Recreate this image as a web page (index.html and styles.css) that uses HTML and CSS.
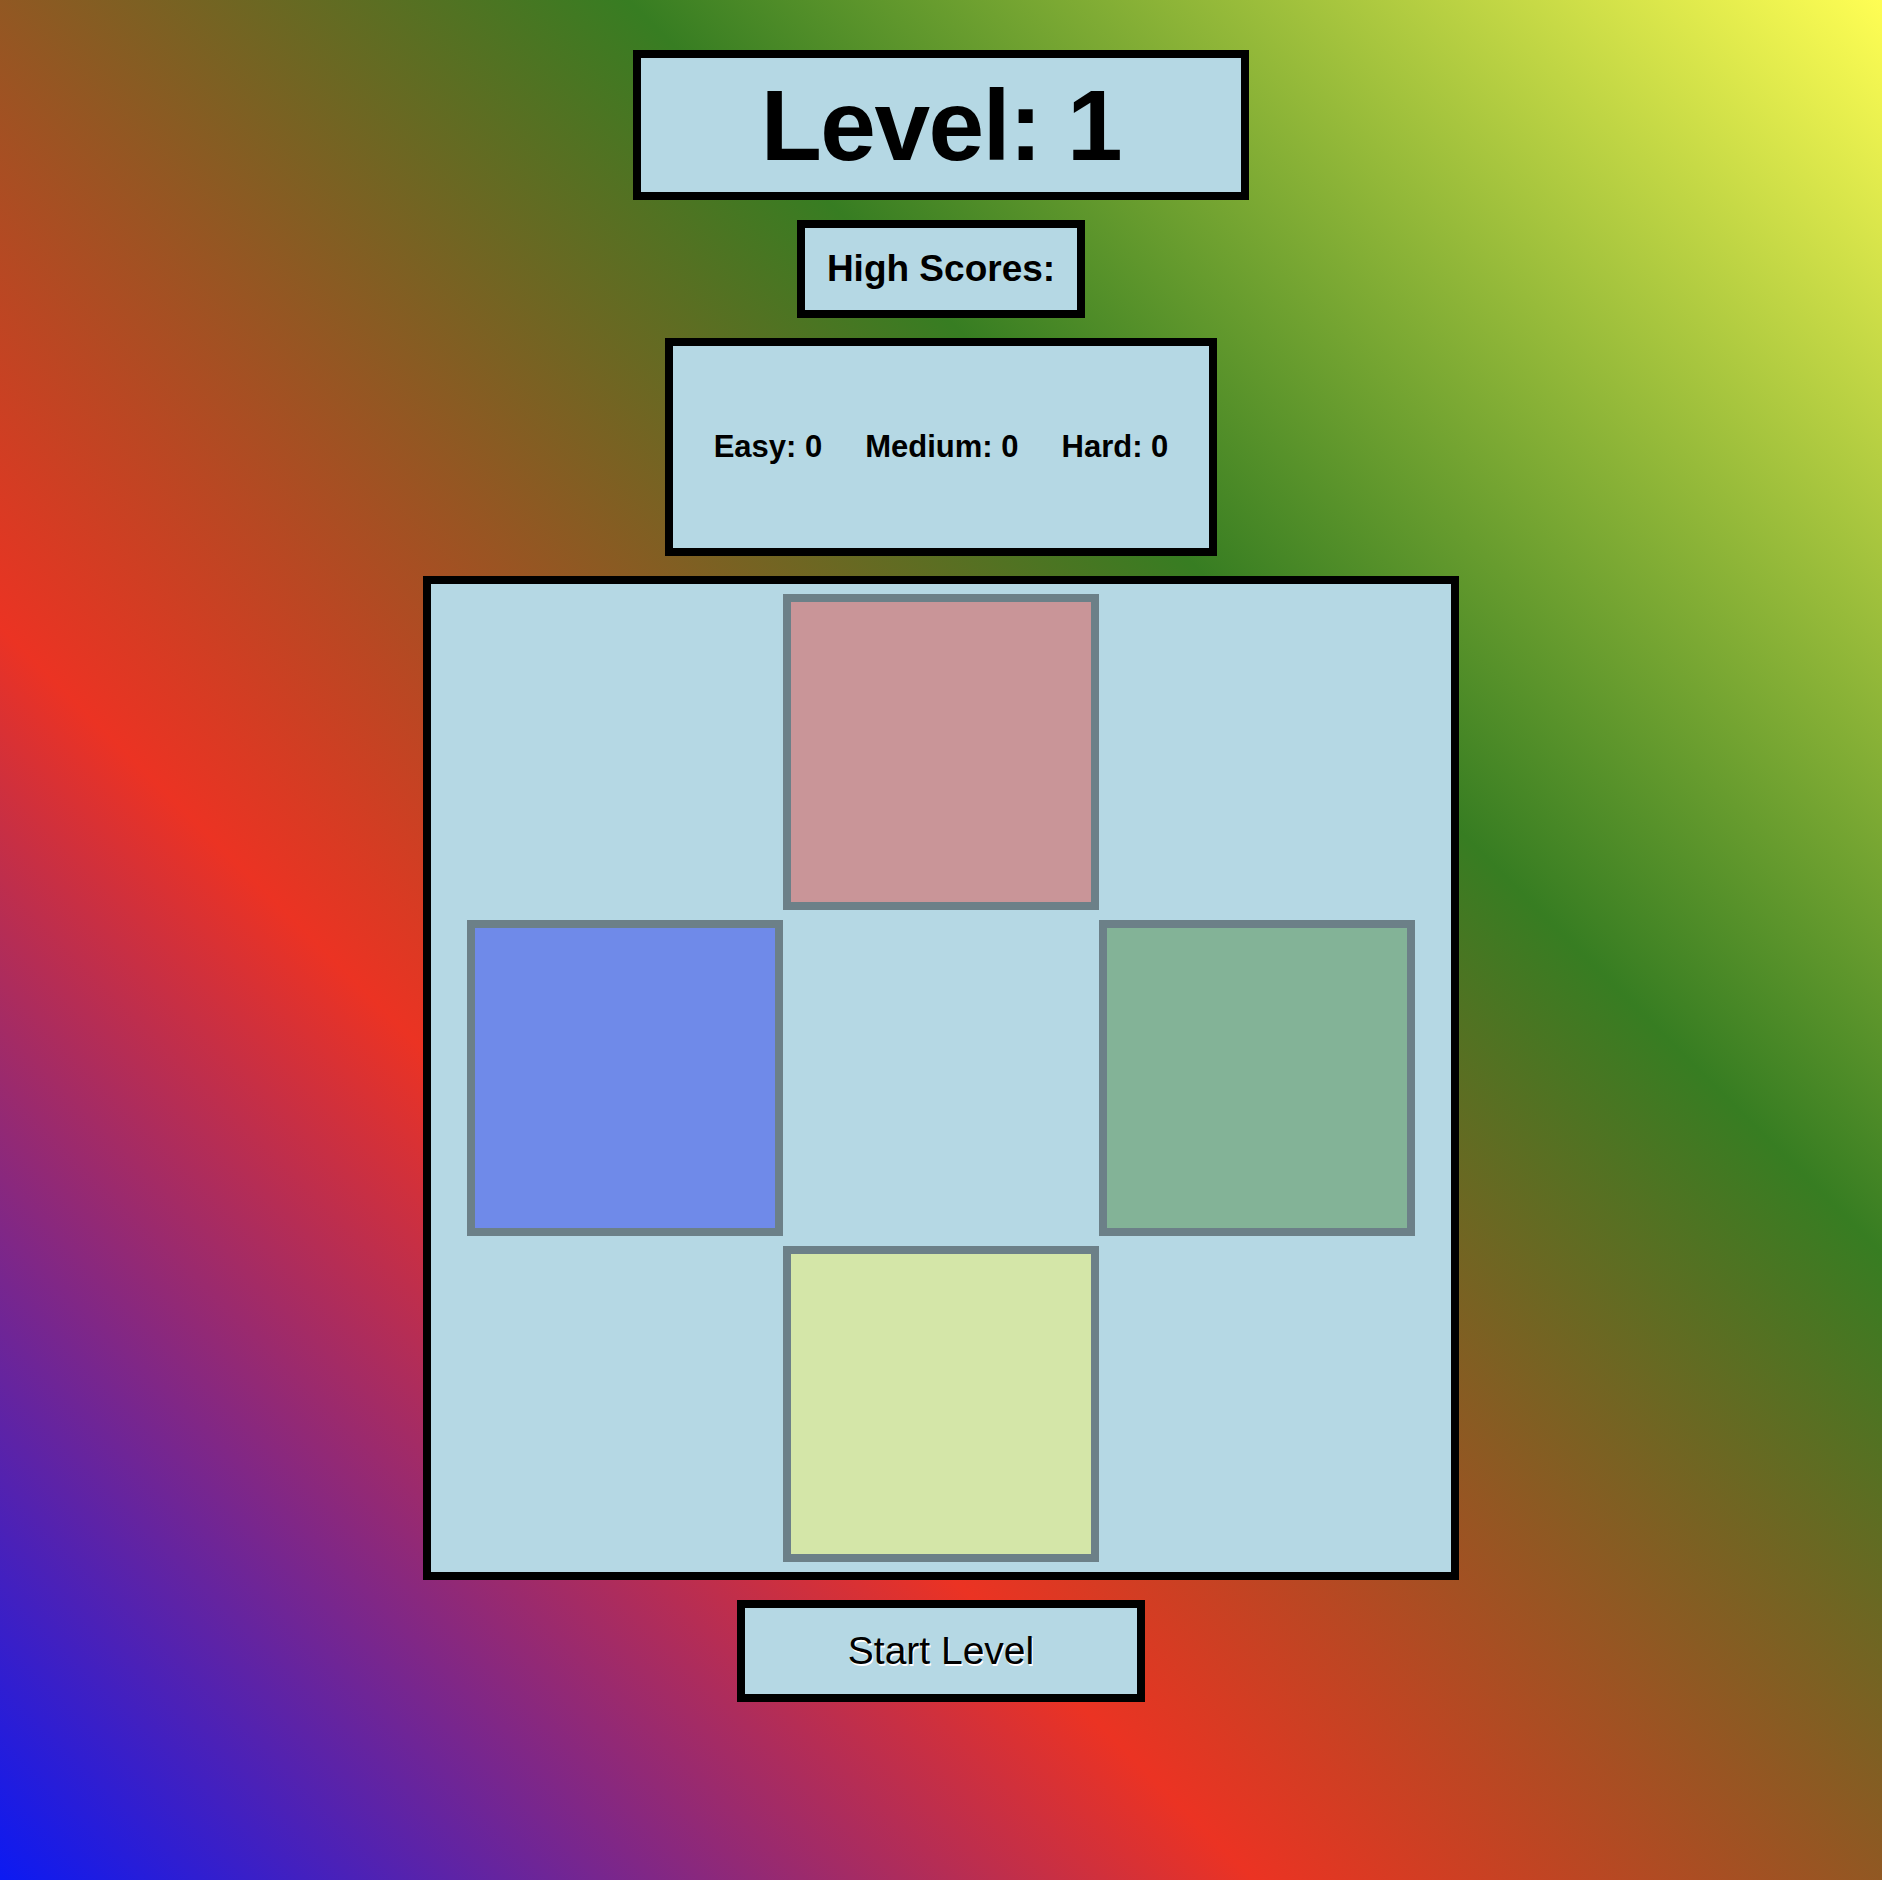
FILE: index.html
```html
<!DOCTYPE html>
<html lang="en">
<head>
    <meta charset="UTF-8">
    <meta name="viewport" content="width=device-width, initial-scale=1.0">
    <title>Simon Says</title>
    <link rel="stylesheet" href="styles.css">
</head>
<body>
    <div class="game">
        <h1 class="level" id="level">Level: 1</h1>

        <div class="scores-title">High Scores:</div>

        <div class="scores">
            <span>Easy: <span id="easyScore">0</span></span>
            <span>Medium: <span id="mediumScore">0</span></span>
            <span>Hard: <span id="hardScore">0</span></span>
        </div>

        <div class="board">
            <div class="cell"></div>
            <div class="pad red" id="red"></div>
            <div class="cell"></div>
            <div class="pad blue" id="blue"></div>
            <div class="cell"></div>
            <div class="pad green" id="green"></div>
            <div class="cell"></div>
            <div class="pad yellow" id="yellow"></div>
            <div class="cell"></div>
        </div>

        <button class="start" id="startBtn">Start Level</button>
    </div>
</body>
</html>
```

FILE: styles.css
```css
* {
    box-sizing: border-box;
}
html {
    height: 100%;
}
body {
    margin: 0;
    min-height: 100vh;
    font-family: "Liberation Sans", Arial, Helvetica, sans-serif;
    color: black;
    background: linear-gradient(to top right, #0c1af2, #eb3323, #377d22, #fffe54);
}
.game {
    display: flex;
    flex-direction: column;
    align-items: center;
    gap: 20px;
    padding-top: 50px;
}
.level, .scores-title, .scores, .board, .start {
    background-color: #b5d8e4;
    border: 8px solid black;
}
.level {
    margin: 0;
    width: 616px;
    height: 150px;
    display: flex;
    align-items: center;
    justify-content: center;
    font-size: 100px;
    font-weight: bold;
    letter-spacing: -1.5px;
}
.scores-title {
    width: 288px;
    height: 98px;
    display: flex;
    align-items: center;
    justify-content: center;
    font-size: 37px;
    font-weight: bold;
}
.scores {
    width: 552px;
    height: 218px;
    display: flex;
    align-items: center;
    justify-content: center;
    gap: 43px;
    font-size: 31px;
    font-weight: bold;
}
.board {
    width: 1036px;
    height: 1004px;
    padding: 10px 36px;
    display: grid;
    grid-template-columns: repeat(3, 316px);
    grid-template-rows: repeat(3, 316px);
    row-gap: 10px;
}
.pad {
    border: 8px solid #6c8088;
}
.red {
    background-color: #c99598;
}
.blue {
    background-color: #6f8ae9;
}
.green {
    background-color: #83b397;
}
.yellow {
    background-color: #d4e6a8;
}
.start {
    width: 408px;
    height: 102px;
    font-family: "Liberation Sans", Arial, Helvetica, sans-serif;
    font-size: 39px;
    color: black;
    text-shadow: 1px 2px 0 white;
    cursor: pointer;
    padding: 0;
}
```
